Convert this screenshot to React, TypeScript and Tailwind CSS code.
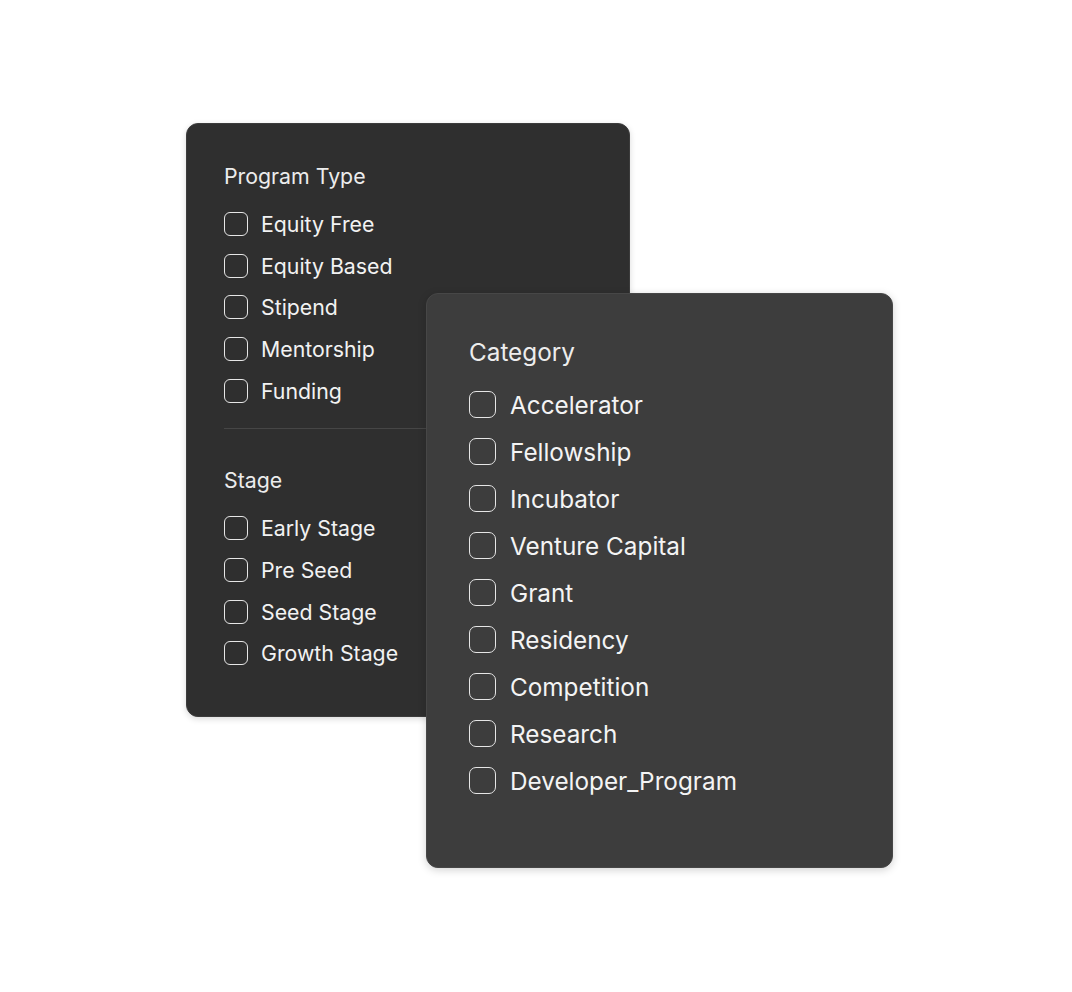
import React from "react";

function Box({ size }: { size: "sm" | "lg" }) {
  return (
    <span
      className={
        size === "sm"
          ? "block w-[24px] h-[24px] rounded-[6px] border-[1.5px] border-[#e6e6e6] shrink-0"
          : "block w-[27px] h-[27px] rounded-[7px] border-[1.5px] border-[#e6e6e6] shrink-0"
      }
    />
  );
}

function SmallRow({ label }: { label: string }) {
  return (
    <div className="flex items-center h-[41.7px] gap-[13px]">
      <Box size="sm" />
      <span className="text-[21.3px] leading-[24px] text-[#f2f2f2]">{label}</span>
    </div>
  );
}

function LargeRow({ label }: { label: string }) {
  return (
    <div className="flex items-center h-[47px] gap-[14px]">
      <Box size="lg" />
      <span className="text-[24.3px] leading-[28px] text-[#f4f4f4]">{label}</span>
    </div>
  );
}

export default function App() {
  const program = ["Equity Free", "Equity Based", "Stipend", "Mentorship", "Funding"];
  const stage = ["Early Stage", "Pre Seed", "Seed Stage", "Growth Stage"];
  const category = [
    "Accelerator",
    "Fellowship",
    "Incubator",
    "Venture Capital",
    "Grant",
    "Residency",
    "Competition",
    "Research",
    "Developer_Program",
  ];
  return (
    <div
      className="relative w-[1072px] h-[992px] bg-white overflow-hidden"
      style={{ fontFamily: "Inter, 'Noto Sans', sans-serif" }}
    >
      <div className="absolute left-[186px] top-[123px] w-[444px] h-[594px] rounded-[12px] bg-[#2f2f2f] border border-[#3c3c3c] shadow-[0_2px_6px_rgba(0,0,0,0.15)] px-[37px] pt-[40px]">
        <div className="text-[21.3px] leading-[24px] text-[#ececec]">Program Type</div>
        <div className="flex flex-col mt-[15px]">
          {program.map((p) => (
            <SmallRow key={p} label={p} />
          ))}
        </div>
        <div className="h-px bg-[#464646] mt-[17px]" />
        <div className="text-[21.3px] leading-[24px] text-[#ececec] mt-[39px]">Stage</div>
        <div className="flex flex-col mt-[15px]">
          {stage.map((p) => (
            <SmallRow key={p} label={p} />
          ))}
        </div>
      </div>
      <div className="absolute left-[426px] top-[293px] w-[467px] h-[575px] rounded-[12px] bg-[#3d3d3d] border border-[#474747] shadow-[0_2px_8px_rgba(0,0,0,0.18)] px-[42px] pt-[44px]">
        <div className="text-[24.3px] leading-[28px] text-[#ededed]">Category</div>
        <div className="flex flex-col mt-[15px]">
          {category.map((c) => (
            <LargeRow key={c} label={c} />
          ))}
        </div>
      </div>
    </div>
  );
}
